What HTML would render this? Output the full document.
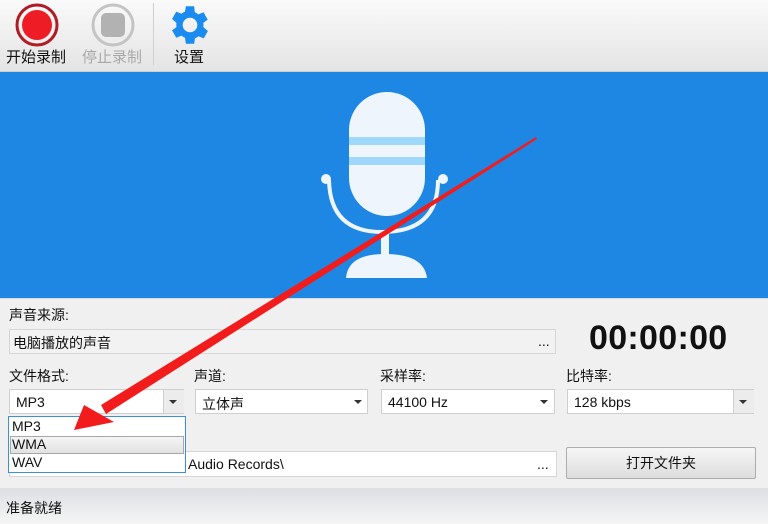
<!DOCTYPE html>
<html><head><meta charset="utf-8"><style>
*{margin:0;padding:0;box-sizing:border-box}
body{width:768px;height:524px;overflow:hidden;background:#f0f0f0;font-family:"Liberation Sans","Noto Sans CJK SC",sans-serif;font-size:14px;color:#111;position:relative}
.a{position:absolute}
.tb{left:0;top:0;width:768px;height:72px;background:linear-gradient(#fafafa,#e4e4e4);border-bottom:1px solid #cfcfcf}
.lbl{font-size:14px;white-space:nowrap}
.tl{font-size:15px;white-space:nowrap}
.fld{background:#fff;border:1px solid #d6d6d6}
.dis{background:#f2f2f2;border:1px solid #d6d6d6}
.cb{background:#fff;border:1px solid #cfcfcf;height:25px}
.cb span{position:absolute;left:6px;top:4px}
.ar{position:absolute;width:0;height:0;border-left:4px solid transparent;border-right:4px solid transparent;border-top:4px solid #333}
</style></head><body>
<div class="a tb"></div>
<svg class="a" style="left:14px;top:2px" width="46" height="46"><circle cx="23" cy="23" r="20" fill="none" stroke="#b01c24" stroke-width="3"/><circle cx="23" cy="23" r="15" fill="#ee1c25"/></svg>
<div class="a tl" style="left:6px;top:46px">开始录制</div>
<svg class="a" style="left:90px;top:2px" width="46" height="46"><circle cx="23" cy="23" r="20" fill="none" stroke="#c4c4c4" stroke-width="3"/><rect x="11" y="11" width="24" height="24" rx="5" fill="#b2b2b2"/></svg>
<div class="a tl" style="left:82px;top:46px;color:#a8a8a8">停止录制</div>
<div class="a" style="left:153px;top:3px;width:1px;height:62px;background:#cfcfcf"></div>
<svg class="a" style="left:165px;top:0px" width="50" height="50" viewBox="0 0 24 24"><path fill="#1a8cf0" d="M19.4 13a7.5 7.5 0 0 0 0-2l2.1-1.6-2-3.5-2.5 1a7 7 0 0 0-1.7-1L15 3h-4l-.4 2.6a7 7 0 0 0-1.700 1l-2.5-1-2 3.5L6.5 11a7.5 7.5 0 0 0 0 2l-2.1 1.600 2 3.500 2.500-1a7 7 0 0 0 1.700 1L11 21h4l.4-2.600a7 7 0 0 0 1.700-1l2.500 1 2-3.500zM13 15.500a3.500 3.500 0 1 1 0-7 3.500 3.500 0 0 1 0 7z" transform="translate(-1 0)"/></svg>
<div class="a tl" style="left:174px;top:46px">设置</div>
<div class="a" style="left:0;top:72px;width:768px;height:226px;background:#1e86e3"></div>
<svg class="a" style="left:0;top:72px" width="768" height="226">
<path d="M329 108 Q330 160 382 160 Q438 160 438 108" fill="none" stroke="#eef5fd" stroke-width="4"/>
<circle cx="326" cy="107" r="5" fill="#eef5fd"/><circle cx="443" cy="107" r="5" fill="#eef5fd"/>
<rect x="381" y="158" width="8" height="28" fill="#eef5fd"/>
<path d="M346 206 Q348 182 385 182 Q424 182 427 206 Z" fill="#eef5fd"/>
<rect x="349" y="20" width="76" height="124" rx="38" fill="#eef5fd"/>
<rect x="349" y="65" width="76" height="8" fill="#9fd8fb"/>
<rect x="349" y="85" width="76" height="8" fill="#9fd8fb"/>
</svg>
<div class="a" style="left:0;top:298px;width:768px;height:1px;background:#d8d8d8"></div>
<div class="a lbl" style="left:9px;top:305px">声音来源:</div>
<div class="a dis" style="left:9px;top:329px;width:547px;height:25px"><span class="a" style="left:3px;top:3px">电脑播放的声音</span><span class="a" style="left:528px;top:3px">...</span></div>
<div class="a" style="left:589px;top:319px;font-size:34px;font-weight:bold;letter-spacing:0.3px">00:00:00</div>
<div class="a lbl" style="left:9px;top:366px">文件格式:</div>
<div class="a lbl" style="left:194px;top:366px">声道:</div>
<div class="a lbl" style="left:380px;top:366px">采样率:</div>
<div class="a lbl" style="left:566px;top:366px">比特率:</div>
<div class="a cb" style="left:9px;top:389px;width:175px"><span>MP3</span><div class="a" style="left:153px;top:0;width:21px;height:23px;background:#ececec;border-left:1px solid #cfcfcf"></div><div class="ar" style="left:159px;top:10px"></div></div>
<div class="a cb" style="left:195px;top:389px;width:173px"><span>立体声</span><div class="ar" style="left:158px;top:10px"></div></div>
<div class="a cb" style="left:381px;top:389px;width:174px"><span>44100 Hz</span><div class="ar" style="left:158px;top:10px"></div></div>
<div class="a cb" style="left:567px;top:389px;width:187px"><span>128 kbps</span><div class="a" style="left:165px;top:0;width:21px;height:23px;background:#ececec;border-left:1px solid #cfcfcf"></div><div class="ar" style="left:171px;top:10px"></div></div>
<div class="a fld" style="left:9px;top:451px;width:548px;height:26px"><span class="a" style="left:178px;top:4px">Audio Records\</span><span class="a" style="left:527px;top:4px">...</span></div>
<div class="a" style="left:566px;top:447px;width:190px;height:32px;border:1px solid #adadad;border-radius:2px;background:linear-gradient(#f6f6f6,#dddddd);text-align:center;line-height:30px">打开文件夹</div>
<div class="a" style="left:8px;top:416px;width:178px;height:57px;background:#fff;border:1px solid #3c8fe0">
<div class="a" style="left:3px;top:1px">MP3</div>
<div class="a" style="left:1px;top:19px;width:174px;height:18px;background:linear-gradient(#f4f4f4,#e2e2e2);border:1px solid #a8a8a8"></div>
<div class="a" style="left:3px;top:19px">WMA</div>
<div class="a" style="left:3px;top:37px">WAV</div>
</div>
<div class="a" style="left:0;top:488px;width:768px;height:36px;background:linear-gradient(#dcdfe2,#f5f5f5)"></div>
<div class="a lbl" style="left:6px;top:498px">准备就绪</div>
<svg class="a" style="left:0;top:0" width="768" height="524">
<polygon points="536,137 537,139 106,414 101,405" fill="#f21c1c"/>
<polygon points="74,430 84,405 114,422" fill="#f21c1c"/>
</svg>
</body></html>
